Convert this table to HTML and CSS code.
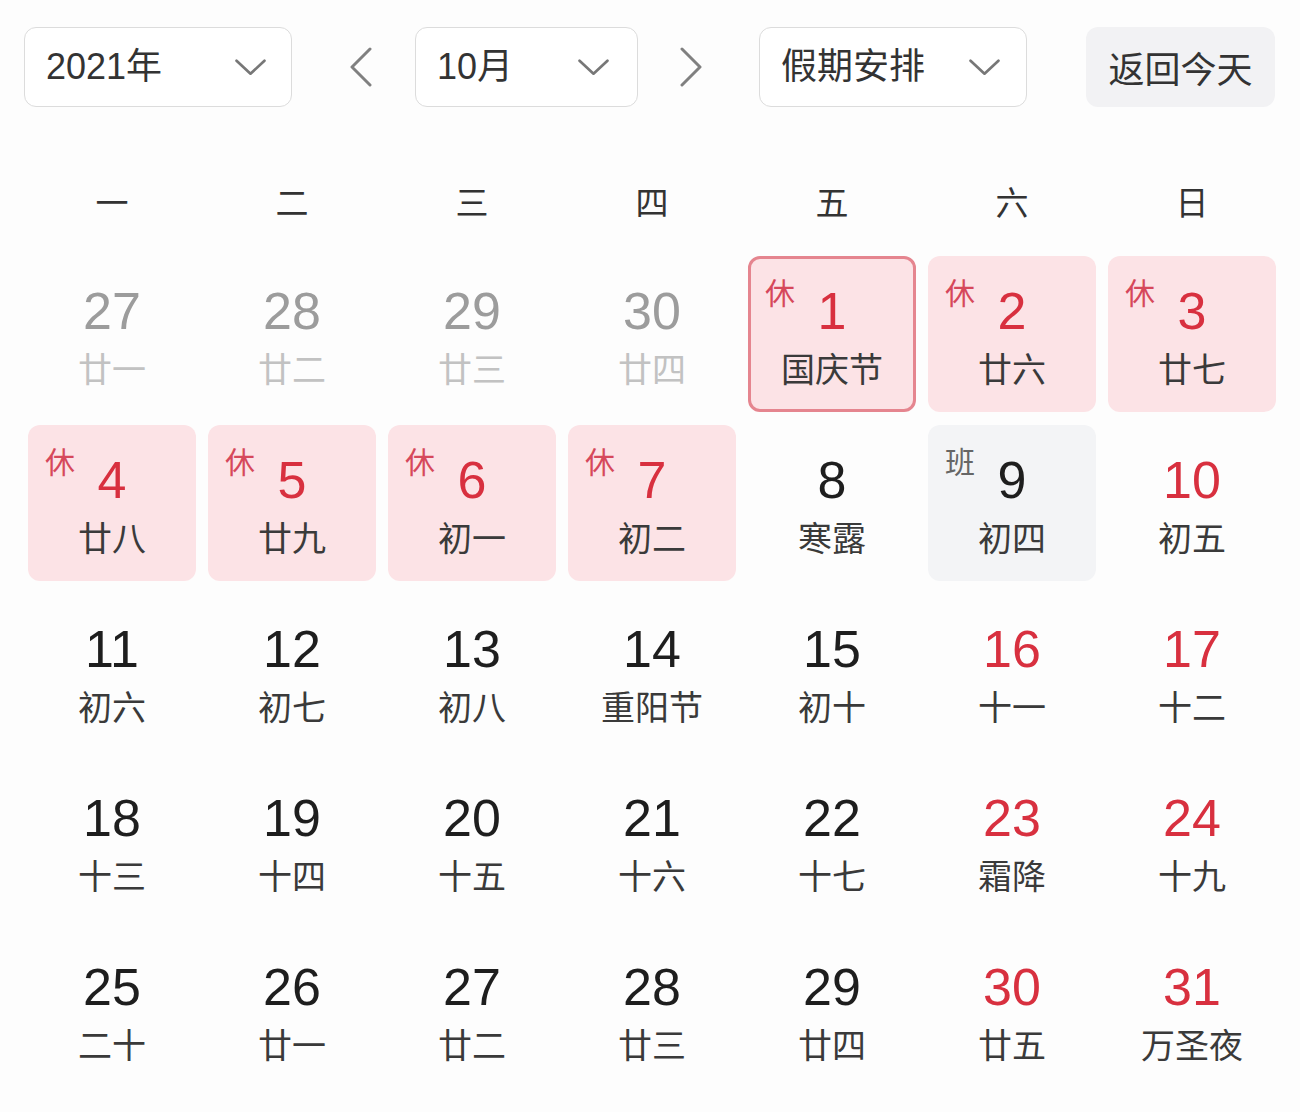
FILE: index.html
```html
<!DOCTYPE html>
<html lang="zh-CN">
<head>
<meta charset="utf-8">
<title>万年历</title>
<link rel="stylesheet" href="styles.css">
</head>
<body>
<div class="calendar">
  <div class="toolbar">
    <div class="select select-year"><span>2021年</span><svg class="chev" viewBox="0 0 30 16"><path d="M1.5 1.5 L15 14 L28.5 1.5"/></svg></div>
    <div class="arrow arrow-prev"><svg viewBox="0 0 24 40"><path d="M21 2 L3 20 L21 38"/></svg></div>
    <div class="select select-month"><span>10月</span><svg class="chev" viewBox="0 0 30 16"><path d="M1.5 1.5 L15 14 L28.5 1.5"/></svg></div>
    <div class="arrow arrow-next"><svg viewBox="0 0 24 40"><path d="M3 2 L21 20 L3 38"/></svg></div>
    <div class="select select-holiday"><span>假期安排</span><svg class="chev" viewBox="0 0 30 16"><path d="M1.5 1.5 L15 14 L28.5 1.5"/></svg></div>
    <div class="today-btn">返回今天</div>
  </div>

  <div class="weekdays">
    <div>一</div><div>二</div><div>三</div><div>四</div><div>五</div><div>六</div><div>日</div>
  </div>

  <div class="days">
    <div class="day other"><div class="num">27</div><div class="lunar">廿一</div></div>
    <div class="day other"><div class="num">28</div><div class="lunar">廿二</div></div>
    <div class="day other"><div class="num">29</div><div class="lunar">廿三</div></div>
    <div class="day other"><div class="num">30</div><div class="lunar">廿四</div></div>
    <div class="day rest selected"><span class="tag">休</span><div class="num">1</div><div class="lunar">国庆节</div></div>
    <div class="day rest"><span class="tag">休</span><div class="num">2</div><div class="lunar">廿六</div></div>
    <div class="day rest"><span class="tag">休</span><div class="num">3</div><div class="lunar">廿七</div></div>

    <div class="day rest"><span class="tag">休</span><div class="num">4</div><div class="lunar">廿八</div></div>
    <div class="day rest"><span class="tag">休</span><div class="num">5</div><div class="lunar">廿九</div></div>
    <div class="day rest"><span class="tag">休</span><div class="num">6</div><div class="lunar">初一</div></div>
    <div class="day rest"><span class="tag">休</span><div class="num">7</div><div class="lunar">初二</div></div>
    <div class="day"><div class="num">8</div><div class="lunar">寒露</div></div>
    <div class="day work"><span class="tag">班</span><div class="num">9</div><div class="lunar">初四</div></div>
    <div class="day weekend"><div class="num">10</div><div class="lunar">初五</div></div>

    <div class="day"><div class="num">11</div><div class="lunar">初六</div></div>
    <div class="day"><div class="num">12</div><div class="lunar">初七</div></div>
    <div class="day"><div class="num">13</div><div class="lunar">初八</div></div>
    <div class="day"><div class="num">14</div><div class="lunar">重阳节</div></div>
    <div class="day"><div class="num">15</div><div class="lunar">初十</div></div>
    <div class="day weekend"><div class="num">16</div><div class="lunar">十一</div></div>
    <div class="day weekend"><div class="num">17</div><div class="lunar">十二</div></div>

    <div class="day"><div class="num">18</div><div class="lunar">十三</div></div>
    <div class="day"><div class="num">19</div><div class="lunar">十四</div></div>
    <div class="day"><div class="num">20</div><div class="lunar">十五</div></div>
    <div class="day"><div class="num">21</div><div class="lunar">十六</div></div>
    <div class="day"><div class="num">22</div><div class="lunar">十七</div></div>
    <div class="day weekend"><div class="num">23</div><div class="lunar">霜降</div></div>
    <div class="day weekend"><div class="num">24</div><div class="lunar">十九</div></div>

    <div class="day"><div class="num">25</div><div class="lunar">二十</div></div>
    <div class="day"><div class="num">26</div><div class="lunar">廿一</div></div>
    <div class="day"><div class="num">27</div><div class="lunar">廿二</div></div>
    <div class="day"><div class="num">28</div><div class="lunar">廿三</div></div>
    <div class="day"><div class="num">29</div><div class="lunar">廿四</div></div>
    <div class="day weekend"><div class="num">30</div><div class="lunar">廿五</div></div>
    <div class="day weekend"><div class="num">31</div><div class="lunar">万圣夜</div></div>
  </div>
</div>
</body>
</html>
```

FILE: styles.css
```css
* { box-sizing: border-box; }

html, body {
  margin: 0;
  padding: 0;
  background: #fdfdfd;
}

body {
  font-family: "Liberation Sans", "Noto Sans CJK SC", sans-serif;
  color: #222;
}

.calendar {
  width: 1300px;
  height: 1112px;
  padding: 27px 24px 0 24px;
}

/* toolbar */
.toolbar {
  display: flex;
  align-items: center;
  height: 80px;
}

.select {
  height: 80px;
  border: 1.5px solid #dcdcdc;
  border-radius: 12px;
  background: #fff;
  display: flex;
  align-items: center;
  justify-content: space-between;
  padding: 0 25px 0 21px;
  font-size: 36px;
  color: #333;
}

.select span { line-height: 1; }

.select-year { width: 268px; }
.select-month { width: 223px; padding-right: 28px; }
.select-holiday { width: 268px; padding-right: 26px; }

.chev {
  width: 31px;
  height: 17px;
  fill: none;
  stroke: #777;
  stroke-width: 2.6;
  stroke-linecap: round;
  stroke-linejoin: round;
}

.arrow {
  width: 24px;
  height: 40px;
  display: flex;
}
.arrow svg {
  width: 24px;
  height: 40px;
  fill: none;
  stroke: #808080;
  stroke-width: 3;
  stroke-linecap: round;
  stroke-linejoin: round;
}
.arrow-prev { margin: 0 42px 0 57px; }
.arrow-next { margin: 0 56px 0 41px; }

.today-btn {
  margin-left: 59px;
  width: 189px;
  height: 80px;
  border-radius: 12px;
  background: #f2f2f4;
  display: flex;
  align-items: center;
  justify-content: center;
  font-size: 36px;
  color: #333;
}

/* weekdays */
.weekdays {
  display: grid;
  grid-template-columns: repeat(7, 168px);
  column-gap: 12px;
  margin: 64px 0 0 4px;
  height: 60px;
  align-items: center;
}
.weekdays div {
  text-align: center;
  font-size: 33px;
  line-height: 60px;
  color: #333;
  font-family: "Noto Sans CJK SC", sans-serif;
}

/* days */
.days {
  display: grid;
  grid-template-columns: repeat(7, 168px);
  grid-auto-rows: 156px;
  column-gap: 12px;
  row-gap: 13px;
  margin: 25px 0 0 4px;
}

.day {
  position: relative;
  border-radius: 12px;
  display: flex;
  flex-direction: column;
  align-items: center;
  padding-top: 27px;
}

.num {
  font-size: 52px;
  line-height: 56px;
  color: #1e1e1e;
}

.lunar {
  margin-top: 11px;
  font-family: "Noto Sans CJK SC", sans-serif;
  font-size: 34px;
  line-height: 36px;
  color: #3a3a3a;
}

.tag {
  position: absolute;
  left: 17px;
  top: 17px;
  font-family: "Noto Sans CJK SC", sans-serif;
  font-size: 30px;
  line-height: 36px;
  color: #d6485b;
}

.other .num { color: #9c9c9c; }
.other .lunar { color: #c2c2c2; }

.rest { background: #fce3e6; }
.rest .num { color: #d8303f; }

.selected {
  border: 3px solid #e5858f;
  padding-top: 24px;
}
.selected .tag { left: 14px; top: 14px; }

.work { background: #f3f4f6; }
.work .tag { color: #666; }

.weekend .num { color: #d8303f; }
```
